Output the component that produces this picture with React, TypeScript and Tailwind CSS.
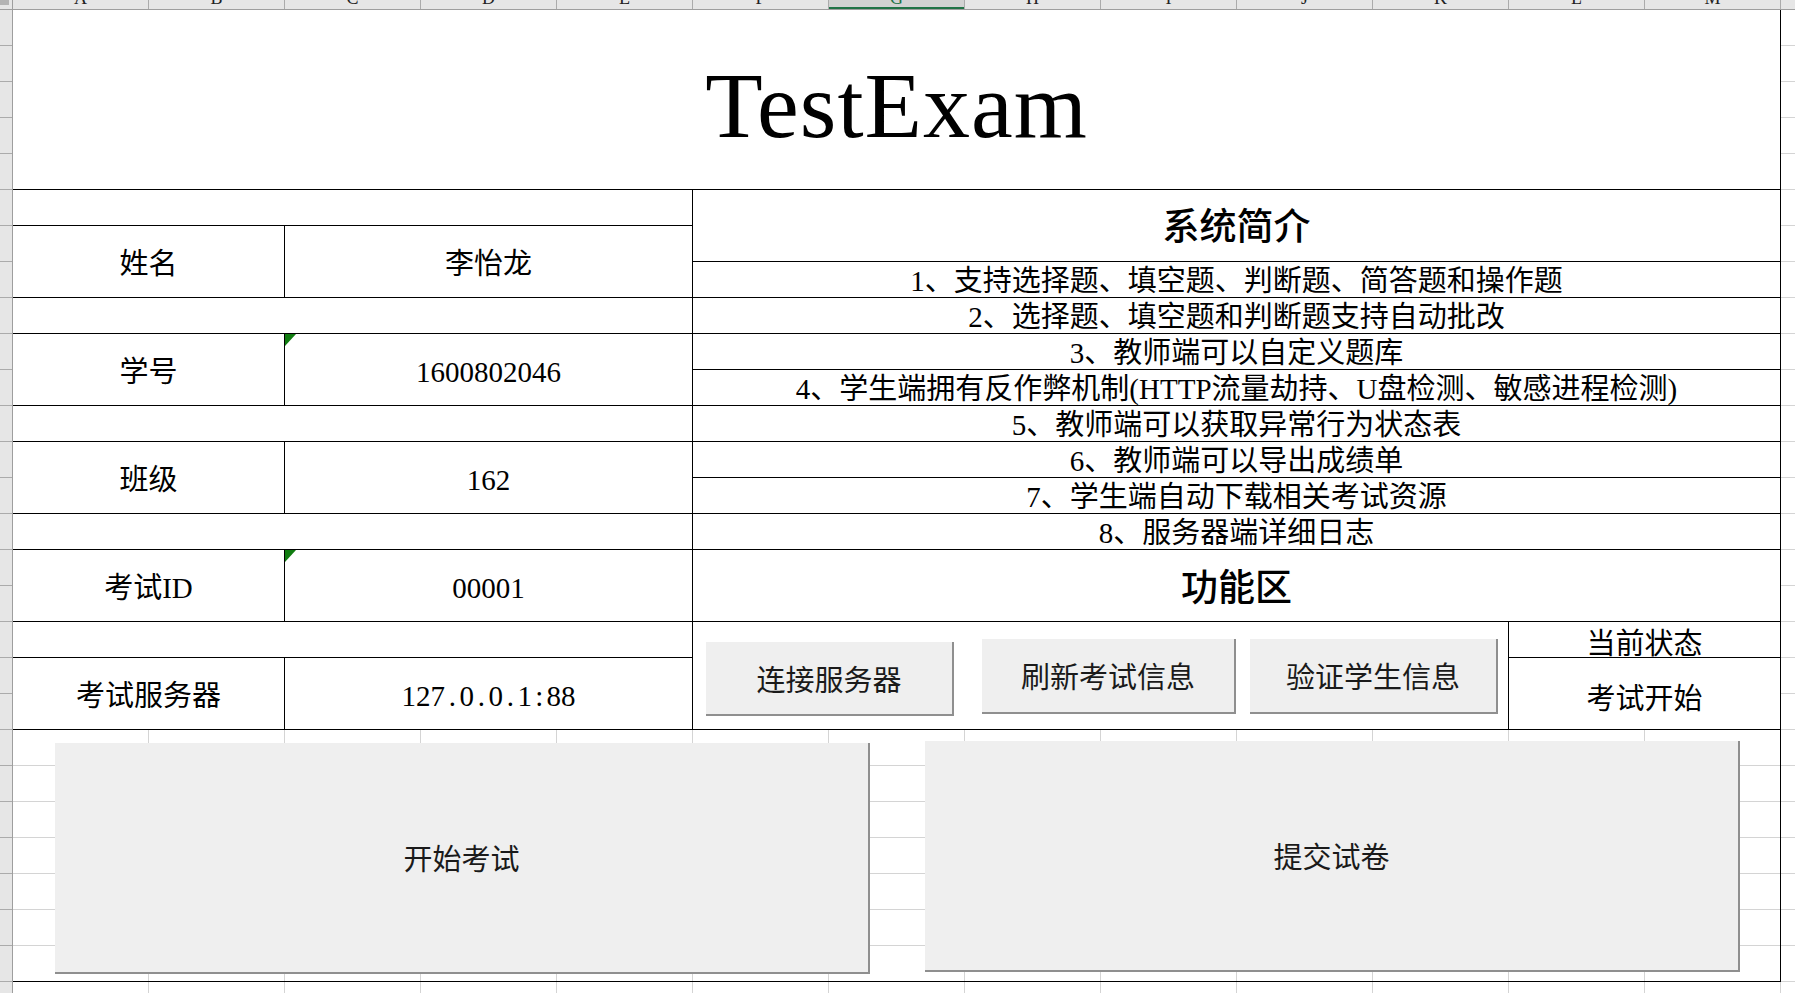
import React from "react";

const COLS = ["A", "B", "C", "D", "E", "F", "G", "H", "I", "J", "K", "L", "M"];
const ROWS = Array.from({ length: 28 }, (_, i) => i + 1);
const GRID_CELLS = Array.from({ length: 7 * 13 }, (_, i) => i);

const INFO = [
  { label: "姓名", value: "李怡龙" },
  { label: "学号", value: "1600802046", flag: true },
  { label: "班级", value: "162" },
  { label: "考试ID", value: "00001", flag: true },
  { label: "考试服务器", value: "127.0.0.1:88", mono: true },
];

const FEATURES = [
  "1、支持选择题、填空题、判断题、简答题和操作题",
  "2、选择题、填空题和判断题支持自动批改",
  "3、教师端可以自定义题库",
  "4、学生端拥有反作弊机制(HTTP流量劫持、U盘检测、敏感进程检测)",
  "5、教师端可以获取异常行为状态表",
  "6、教师端可以导出成绩单",
  "7、学生端自动下载相关考试资源",
  "8、服务器端详细日志",
];

// half-width boxes, like the sheet's SimSun latin glyphs
const Mono = ({ text }: { text: string }) => (
  <>
    {text.split("").map((ch, i) => (
      <span key={i} className="inline-block w-[0.5em] text-center">
        {ch}
      </span>
    ))}
  </>
);

const GreenFlag = () => (
  <svg className="absolute top-0 left-0" width="12" height="12" viewBox="0 0 12 12">
    <polygon points="0,0 11,0 0,12" fill="#107c10" />
  </svg>
);

const SheetButton = ({ label, className }: { label: string; className: string }) => (
  <button
    type="button"
    className={`relative shrink-0 bg-[#efefef] border-r-2 border-b-2 border-[#8f8f8f] flex items-center justify-center font-['Noto_Sans_CJK_SC',sans-serif] text-[29px] leading-none text-[#1a1a1a] ${className}`}
  >
    {label}
  </button>
);

export default function App() {
  return (
    <div className="w-[1795px] h-[993px] overflow-hidden bg-white flex flex-col font-['Liberation_Serif','Noto_Sans_CJK_SC',serif] text-black">
      {/* column headers */}
      <div className="flex h-[10px] shrink-0 bg-[#e6e6e6] border-b border-[#9e9e9e]">
        <div className="w-[13px] shrink-0 border-r border-[#9e9e9e]">
          <div className="w-[9px] h-[5px] bg-[#b4b4b4]" />
        </div>
        {COLS.map((c) => (
          <div
            key={c}
            className={`w-[136px] shrink-0 border-r border-[#ababab] flex items-end justify-center overflow-hidden pb-[2px] ${
              c === "G" ? "bg-[#d2d2d2] shadow-[inset_0_-2px_0_#217346] text-[#217346]" : "text-[#222]"
            }`}
          >
            <span className="text-[18px] leading-[18px] shrink-0">{c}</span>
          </div>
        ))}
        <div className="flex-1" />
      </div>

      <div className="flex flex-1 min-h-0">
        {/* row headers */}
        <div className="w-[13px] shrink-0 bg-[#e6e6e6] border-r border-[#9e9e9e] flex flex-col">
          {ROWS.map((r) => (
            <div key={r} className="h-[36px] shrink-0 border-b border-[#ababab]" />
          ))}
        </div>

        {/* sheet */}
        <div className="w-[1768px] shrink-0 flex flex-col">
          {/* title */}
          <div className="h-[180px] shrink-0 border-b border-r border-black flex items-center justify-center pt-[10px]">
            <span className="text-[94px] leading-none tracking-[1px]">TestExam</span>
          </div>

          <div className="h-[540px] shrink-0 flex">
            {/* student info */}
            <div className="w-[680px] shrink-0 border-r border-black flex flex-col">
              {INFO.map((row) => (
                <React.Fragment key={row.label}>
                  <div className="h-[36px] shrink-0 border-b border-black" />
                  <div className="h-[72px] shrink-0 border-b border-black flex text-[29px] leading-none">
                    <div className="w-[272px] shrink-0 border-r border-black flex items-center justify-center pt-[5px]">
                      {row.label}
                    </div>
                    <div className="relative flex-1 flex items-center justify-center pt-[5px]">
                      {row.flag && <GreenFlag />}
                      {row.mono ? <Mono text={row.value} /> : row.value}
                    </div>
                  </div>
                </React.Fragment>
              ))}
            </div>

            {/* intro + functions */}
            <div className="flex-1 border-r border-black flex flex-col">
              <div className="h-[72px] shrink-0 border-b border-black flex items-center justify-center text-[37px] leading-none font-medium pt-[3px]">
                系统简介
              </div>
              {FEATURES.map((f) => (
                <div key={f} className="h-[36px] shrink-0 border-b border-black flex items-center justify-center text-[29px] leading-none whitespace-nowrap pt-[3px]">
                  {f}
                </div>
              ))}
              <div className="h-[72px] shrink-0 border-b border-black flex items-center justify-center text-[37px] leading-none font-medium pt-[5px]">
                功能区
              </div>
              <div className="h-[108px] shrink-0 border-b border-black flex">
                <div className="w-[816px] shrink-0 border-r border-black flex items-start">
                  <SheetButton label="连接服务器" className="ml-[13px] mt-[20px] w-[248px] h-[74px]" />
                  <SheetButton label="刷新考试信息" className="ml-[28px] mt-[17px] w-[254px] h-[75px]" />
                  <SheetButton label="验证学生信息" className="ml-[14px] mt-[17px] w-[248px] h-[75px]" />
                </div>
                <div className="flex-1 flex flex-col font-['Noto_Sans_CJK_SC',sans-serif] text-[29px] leading-none">
                  <div className="h-[36px] shrink-0 border-b border-black flex items-center justify-center pt-[3px]">
                    当前状态
                  </div>
                  <div className="flex-1 flex items-center justify-center pt-[6px]">考试开始</div>
                </div>
              </div>
            </div>
          </div>

          {/* exam actions */}
          <div className="relative h-[252px] shrink-0 border-b border-r border-black flex items-start overflow-hidden">
            <div className="absolute inset-0 grid grid-cols-[repeat(13,136px)] grid-rows-[repeat(7,36px)]">
              {GRID_CELLS.map((i) => (
                <div key={i} className="border-r border-b border-[#d4d4d4]" />
              ))}
            </div>
            <SheetButton label="开始考试" className="ml-[42px] mt-[13px] w-[815px] h-[231px]" />
            <SheetButton label="提交试卷" className="ml-[55px] mt-[11px] w-[815px] h-[231px]" />
          </div>

          <div className="h-[36px] shrink-0 flex">
            {COLS.map((c) => (
              <div key={c} className="w-[136px] shrink-0 border-r border-[#d4d4d4]" />
            ))}
          </div>
        </div>

        {/* columns beyond the table */}
        <div className="flex-1 flex flex-col">
          {ROWS.map((r) => (
            <div key={r} className="h-[36px] shrink-0 border-b border-[#d4d4d4]" />
          ))}
        </div>
      </div>
    </div>
  );
}
